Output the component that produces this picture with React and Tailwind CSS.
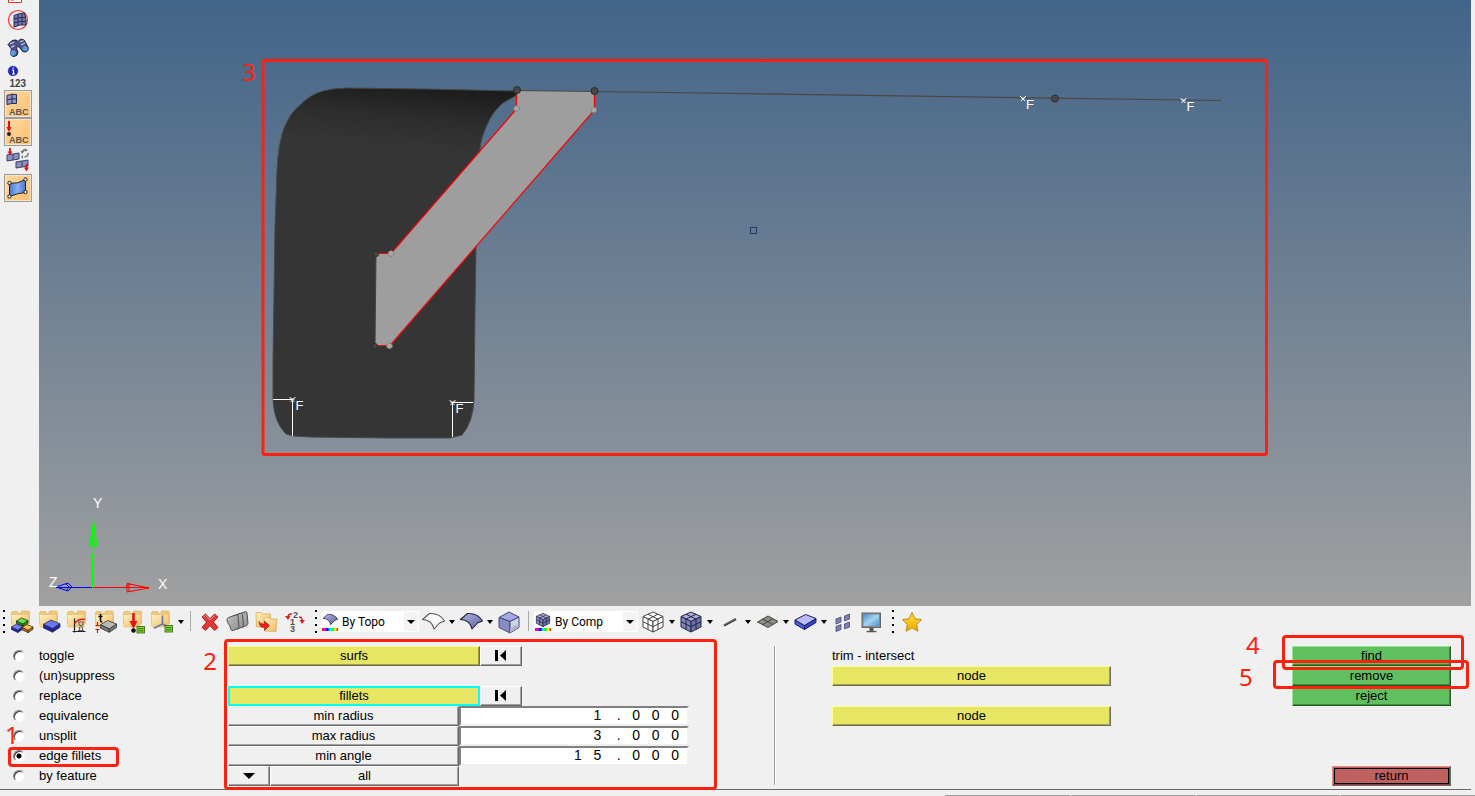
import React, { useState } from 'react';
import clsx from 'clsx';

const MODES = ['toggle', '(un)suppress', 'replace', 'equivalence', 'unsplit', 'edge fillets', 'by feature'];

const TONES = {
  gray: 'bg-[#f0f0f0] border-t-white border-l-white border-r-[#696969] border-b-[#696969] shadow-[inset_-1px_-1px_0_#a0a0a0]',
  yellow: 'bg-[#e6e664] border-t-[#ffff96] border-l-[#ffff96] border-r-[#696969] border-b-[#696969] shadow-[inset_-1px_-1px_0_#a4a438]',
  green: 'bg-[#60c060] border-t-[#90e890] border-l-[#90e890] border-r-[#405040] border-b-[#205c20] shadow-[inset_-1px_-1px_0_#3c8c3c]',
  red: 'bg-[#c06060] border-t-[#e88888] border-l-[#e88888] border-r-[#696969] border-b-[#696969] shadow-[inset_-1px_-1px_0_#8c3c3c]',
};

const PanelButton = ({ tone = 'gray', className, children, ...rest }) => (
  <button className={clsx('flex h-5 items-center justify-center border leading-4', TONES[tone], className)} {...rest}>
    {children}
  </button>
);

const Mark = ({ className }) => (
  <div className={clsx('pointer-events-none absolute z-10 rounded-[4px] border-3 border-[#ff2010]', className)} />
);

const MarkNumber = ({ className, children }) => (
  <span className={clsx("pointer-events-none absolute z-10 font-['Noto_Sans',sans-serif] text-2xl leading-6 text-[#ff2010]", className)}>{children}</span>
);

/* ---------- icons ---------- */

const Svg = ({ size = 24, className, children }) => (
  <svg width={size} height={size} viewBox={`0 0 ${size} ${size}`} className={clsx('shrink-0', className)} aria-hidden="true">
    {children}
  </svg>
);

const Gradients = () => (
  <svg width="0" height="0" className="absolute" aria-hidden="true">
    <defs>
      <linearGradient id="folder" x1="0" y1="0" x2="1" y2="1">
        <stop offset="0" stopColor="#fff2c4" />
        <stop offset="1" stopColor="#f0bc60" />
      </linearGradient>
      <linearGradient id="surface" x1="0" y1="0" x2="1" y2="1">
        <stop offset="0" stopColor="#b4b6e4" />
        <stop offset="1" stopColor="#5c60a0" />
      </linearGradient>
      <linearGradient id="card" x1="0" y1="0" x2="1" y2="1">
        <stop offset="0" stopColor="#c0c0c0" />
        <stop offset="1" stopColor="#909090" />
      </linearGradient>
      <linearGradient id="gold" x1="0" y1="0" x2="0" y2="1">
        <stop offset="0" stopColor="#ffe040" />
        <stop offset="1" stopColor="#f0a800" />
      </linearGradient>
      <linearGradient id="sky" x1="0" y1="0" x2="1" y2="1">
        <stop offset="0" stopColor="#4c94d0" />
        <stop offset="0.5" stopColor="#a4d4f0" />
        <stop offset="1" stopColor="#4c94d0" />
      </linearGradient>
      <linearGradient id="face" x1="0" y1="0" x2="1" y2="0">
        <stop offset="0" stopColor="#4478d0" />
        <stop offset="0.5" stopColor="#88b0f0" />
        <stop offset="1" stopColor="#4478d0" />
      </linearGradient>
    </defs>
  </svg>
);

const Folder = () => (
  <g>
    <path d="M1.500 2.500q0-1 1-1h5l1.500 2h2V2q0-1 1-1h6q1.500 0 1.500 1.500v11h-18z" fill="#f0c878" stroke="#dcb060" strokeWidth=".6" />
    <path d="M1 4.500h18l-1 12.500H2z" fill="url(#folder)" stroke="#e8bc70" strokeWidth=".6" />
  </g>
);

const Slab = ({ x, y, w, fill, side }) => (
  <g stroke="#222" strokeWidth=".7" strokeLinejoin="round">
    <path d={`M${x} ${y + w * 0.26}l${w * 0.55} ${w * 0.26}v${w * 0.22}l${-w * 0.55} ${-w * 0.26}z`} fill={side} />
    <path d={`M${x + w * 0.55} ${y + w * 0.52}l${w * 0.45} ${-w * 0.3}v${w * 0.22}l${-w * 0.45} ${w * 0.3}z`} fill={side} />
    <path d={`M${x} ${y + w * 0.26}l${w * 0.45} ${-w * 0.26}l${w * 0.55} ${w * 0.22}l${-w * 0.45} ${w * 0.3}z`} fill={fill} />
  </g>
);

const ListBadge = ({ x, y }) => (
  <g>
    <rect x={x} y={y} width="7.500" height="6.500" fill="#8ce030" stroke="#285c10" strokeWidth=".8" />
    <path d={`M${x + 1} ${y + 2.2}h5.500M${x + 1} ${y + 4.4}h5.500`} stroke="#285c10" strokeWidth=".9" />
  </g>
);

const AssemblyIcon = () => (
  <Svg>
    <Folder />
    <Slab x={6.5} y={8} w={11.5} fill="#5ce83c" side="#209418" />
    <Slab x={1.5} y={14} w={11.5} fill="#7080ff" side="#2028b8" />
    <Slab x={12} y={14.5} w={11} fill="#ffc048" side="#c07810" />
  </Svg>
);

const ComponentIcon = () => (
  <Svg>
    <Folder />
    <Slab x={5.5} y={10} w={16.5} fill="#6878ff" side="#1c24c0" />
  </Svg>
);

const MaterialIcon = () => (
  <Svg>
    <Folder />
    <path d="M8.500 8.500v14M6.500 21.500h13" stroke="#222" strokeWidth="1.200" fill="none" />
    <path d="M8.500 13.500q4-5 10.500-4" stroke="#e02020" strokeWidth="1.500" fill="none" />
    <path d="M12 12h6M13 12v2.500l3.500 3v3M17 12v2.500l-3.500 3v3M12 20.500h6" stroke="#666" strokeWidth="1.200" fill="#eee" />
  </Svg>
);

const PropertyIcon = () => (
  <Svg>
    <Folder />
    <path d="M6.500 4v6.500q0 1.500 1.800 1.200M4.500 6.500h4" stroke="#000" strokeWidth="1.500" fill="none" />
    <path d="M3.500 12v3M1.500 15.500h4M3.500 23v-3M1.500 19.500h4" stroke="#c01818" strokeWidth="1.200" />
    <Slab x={6.5} y={10.5} w={16} fill="#b8b8b8" side="#787878" />
  </Svg>
);

const LoadIcon = () => (
  <Svg>
    <Folder />
    <path d="M11.500 3v9" stroke="#e01414" strokeWidth="2.600" />
    <path d="M7.500 11h8l-4 8z" fill="#e01414" />
    <circle cx="11.500" cy="20.500" r="2.300" fill="#111" />
    <ListBadge x={15} y={16.5} />
  </Svg>
);

const SystemIcon = () => (
  <Svg>
    <Folder />
    <path d="M12.500 6v8l-8 4M12.500 14l6 3" stroke="#6878a8" strokeWidth="1.600" fill="none" strokeLinecap="round" />
    <ListBadge x={15} y={15.5} />
  </Svg>
);

const DeleteIcon = () => (
  <Svg>
    <path d="M4 7l3.500-3 4.500 4.700L16.500 4 20 7l-4.600 5 4.600 5.500-3.500 3-4.500-5-4.500 5L4 17.500 8.600 12z" fill="#e03838" stroke="#b82020" strokeWidth="1" strokeLinejoin="round" />
    <path d="M5.500 7l2-1.500L12 10l4.500-4.500" stroke="#ff9090" strokeWidth="1" fill="none" />
  </Svg>
);

const CardsIcon = () => (
  <Svg>
    {[9, 4.5, 0].map((d) => (
      <path
        key={d}
        d={`M${1 + d} ${9.5 - d * 0.35}q0-1.500 1.500-2l7.500-2.500q1.800-.6 2 1.200l1 10.500q0 1.300-1.200 1.800l-4.500 2q-1.800.7-2.300-1-1-4-3-6.500-1-1.500-1-3.500z`}
        fill="url(#card)"
        stroke="#505050"
        strokeWidth="1"
      />
    ))}
  </Svg>
);

const OrganizeIcon = () => (
  <Svg>
    <path d="M2 3.500q0-1 1-1h4l1.500 1.500h8V17H2.500z" fill="url(#folder)" stroke="#dcac54" strokeWidth=".8" />
    <path d="M10 8.500q0-1 1-1h4l1.500 1.500h6.500l-1 12.500-11-.5z" fill="url(#folder)" stroke="#dcac54" strokeWidth=".8" />
    <path d="M5 11.500q1.500 3 5.500 2.500v-3l5 4.500-5 5v-3q-5.500.5-5.500-6z" fill="#e82018" stroke="#b01010" strokeWidth=".6" />
  </Svg>
);

const RenumberIcon = () => (
  <Svg>
    <g fontFamily="Liberation Sans, sans-serif" fontWeight="700" fontSize="9" fill="#555">
      <text x="11" y="8">2</text>
      <text x="8" y="15">1</text>
      <text x="8" y="22">3</text>
    </g>
    <path d="M10 4Q6.500 3.500 6 6.500M17 7q3.500 0 3 4" stroke="#e02020" strokeWidth="1.400" fill="none" />
    <path d="M3 6h5.500L6 10zM17.500 10h5.500L20 14z" fill="#e02020" />
  </Svg>
);

const CurvedSurface = ({ outline, size = 24 }) => (
  <svg width={size} height={size} viewBox="0 0 24 24" className="shrink-0" aria-hidden="true">
    <path
      d="M1.500 9.500L8.500 3.500Q19 3 23.500 11L18.500 13 13 19Q11 10 1.500 9.500z"
      fill={outline ? '#f8f8f8' : 'url(#surface)'}
      stroke={outline ? '#555' : '#22223a'}
      strokeWidth="1.100"
      strokeLinejoin="round"
    />
  </svg>
);

const CubeIcon = () => (
  <Svg>
    <path d="M2 7.500L12 2l10 5-9 4.500z" fill="#a4a8e0" stroke="#444878" />
    <path d="M2 7.500l11 4V23L2 17.500z" fill="#888cc4" stroke="#444878" />
    <path d="M13 11.500l9-4.500v10.500L13 23z" fill="#d0d2e4" stroke="#444878" />
    <path d="M13 23l9-6-3-2-6 3.500z" fill="#b0b2cc" />
  </Svg>
);

const MeshCube = ({ wire, size = 24 }) => (
  <svg width={size} height={size} viewBox="0 0 24 24" className="shrink-0" aria-hidden="true">
    <g stroke={wire ? '#444' : '#24243c'} strokeWidth="1" strokeLinejoin="round">
      <path d="M2 6.500L12 2l10 4.500-10 5z" fill={wire ? '#fff' : '#a8acdc'} />
      <path d="M2 6.500l10 5V22L2 17z" fill={wire ? '#fff' : '#8084bc'} />
      <path d="M22 6.500l-10 5V22l10-5z" fill={wire ? '#fff' : '#6c70a8'} />
      <path d="M7 4.200l10 5v10.500M17 4.200l-10 5v10.500M2 11.700l10 5 10-5" fill="none" />
    </g>
  </svg>
);

const LineIcon = () => (
  <Svg>
    <path d="M7 15.500L19 9" stroke="#333" strokeWidth="2.200" />
    <path d="M7 15L19 8.500" stroke="#999" strokeWidth=".7" />
  </Svg>
);

const PlateIcon = () => (
  <Svg>
    <path d="M2.500 12L13 6l10 5.500L13 17.500z" fill="#8c8c84" stroke="#444" />
    <path d="M7.500 9l10.500 5.500M18 8.700L7.500 14.700" stroke="#444" />
  </Svg>
);

const SolidIcon = () => (
  <Svg>
    <path d="M2 10v4l9.500 5.500v-4z" fill="#4c5cf0" stroke="#181c58" strokeLinejoin="round" />
    <path d="M11.500 15.500v4L23 12.500v-4z" fill="#3444d0" stroke="#181c58" strokeLinejoin="round" />
    <path d="M2 10l10.500-5.500L23 8.500l-11.500 7z" fill="#b8bcff" stroke="#181c58" strokeLinejoin="round" />
  </Svg>
);

const ShrinkIcon = () => (
  <Svg>
    <g fill="#7c80b8" stroke="#444878" strokeWidth=".8">
      <path d="M5 9l5-2v5l-5 2zM13.500 6l5-2v5l-5 2zM5 16.500l5-2v5L5 21.500zM13.500 14l5-2v5l-5 2z" />
    </g>
  </Svg>
);

const MonitorIcon = () => (
  <Svg>
    <rect x="3" y="3" width="18.500" height="14.500" fill="#888" stroke="#666" />
    <rect x="4.500" y="4.500" width="15.500" height="11.500" fill="url(#sky)" />
    <path d="M10.500 18h4v3h-4zM7.500 21h10v1.200h-10z" fill="#555" />
  </Svg>
);

const StarIcon = () => (
  <Svg>
    <path d="M13 2.500l3 6.300 6.500.8-4.800 4.700 1.200 7-5.900-3.500-5.900 3.500 1.200-7L3.500 9.600 10 8.800z" fill="url(#gold)" stroke="#c08810" strokeLinejoin="round" />
  </Svg>
);

const ToolButton = ({ label, children }) => (
  <button className="h-6 w-6 shrink-0" aria-label={label} title={label}>{children}</button>
);

const Caret = () => (
  <span className="flex h-6 w-[14px] shrink-0 items-center justify-center">
    <svg width="6" height="4" viewBox="0 0 6 4" aria-hidden="true"><path d="M0 0h6L3 4z" fill="#000" /></svg>
  </span>
);

const Grip = ({ className }) => (
  <svg width="4" height="24" viewBox="0 0 4 24" className={clsx('shrink-0', className)} aria-hidden="true">
    <path d="M1 0h2v2H1zM1 7h2v2H1zM1 14h2v2H1zM1 21h2v2H1z" fill="#000" />
  </svg>
);

const Separator = ({ className }) => <div className={clsx('mt-px h-5 w-px shrink-0 bg-[#a8a8a8]', className)} />;

const Combo = ({ label, icon, options, className }) => (
  <div className={clsx('relative mt-px flex h-[21px] shrink-0 items-center bg-white', className)}>
    <span className="flex w-[18px] shrink-0 flex-col items-center">
      {icon}
      <span className="h-[3px] w-4 bg-[linear-gradient(90deg,#f00,#f0f,#00f,#0ff,#0f0,#ff0,#f00)]" />
    </span>
    <select aria-label={label} className="h-full min-w-0 flex-1 appearance-none bg-transparent pl-[3px] font-[Roboto,sans-serif] text-xs text-black outline-none">
      {options.map((o) => <option key={o}>{o}</option>)}
    </select>
    <span className="pointer-events-none absolute inset-y-px right-px flex w-[14px] items-center justify-center bg-[#f4f4f4]">
      <svg width="8" height="4" viewBox="0 0 8 4" aria-hidden="true"><path d="M0 0h8L4 4z" fill="#000" /></svg>
    </span>
  </div>
);

/* ---------- left bar ---------- */

const SideButton = ({ label, pressed, children }) => (
  <button
    aria-label={label}
    className={clsx('flex h-7 w-7 shrink-0 items-center justify-center border', pressed ? 'border-[#9c9c9c] bg-[linear-gradient(135deg,#ffd8a0,#ffc070)] shadow-[inset_0_0_0_1px_#f4e4cc]' : 'border-transparent')}
  >
    {children}
  </button>
);

const ABC = () => (
  <text x="3" y="23" fontFamily="Liberation Sans, sans-serif" fontWeight="700" fontSize="9" fill="#555">ABC</text>
);

const SideBar = () => (
  <aside className="flex w-[39px] shrink-0 flex-col overflow-hidden pl-1">
    <svg width="28" height="6" viewBox="0 0 28 6" className="shrink-0" aria-hidden="true">
      <path d="M4.500 0v2.500h13V0M7 0h3" fill="#fff" stroke="#f03018" />
    </svg>
    <SideButton label="Mask">
      <Svg>
        <circle cx="12" cy="12" r="9.500" fill="#f4e8ec" stroke="#f03828" strokeWidth="1.200" />
        <path d="M8 7.500Q13 5 19 5v2q1.500 5 1 10-6-1-12 2z" fill="#7478b0" stroke="#282c58" />
        <path d="M12 6v12M16 5.500v11.500M8 11q6-2 12-1.500M8 15q6-2.500 12-1.500" stroke="#282c58" fill="none" />
      </Svg>
    </SideButton>
    <SideButton label="Find">
      <Svg>
        <path d="M2 8.500l4-4 4-.5 2 1.500 2.500-2.500 3.500 1 4 7q1 4-2.500 5-3.500.5-4.500-3l-3-2.500-2 1 2 4.500q0 4-4 4.500-3.500 0-3.500-3.500l1-4z" fill="#4c5084" stroke="#1c2040" />
        <circle cx="7" cy="17" r="2.800" fill="#5c9cf0" />
        <circle cx="19" cy="12.500" r="2.500" fill="#5c9cf0" />
        <path d="M4 8l4-2M5 11.500l3.500-2M14 6l3.500-1.500M15 9l4-2" stroke="#c8cce4" strokeWidth="1.300" />
      </Svg>
    </SideButton>
    <SideButton label="Numbers">
      <Svg>
        <circle cx="7" cy="7" r="4.800" fill="#1c28c0" stroke="#101878" strokeWidth=".5" />
        <path d="M6 6h1.500v4M6 10h3M6.500 4h1.500" stroke="#fff" strokeWidth="1.200" fill="none" />
        <text x="3.500" y="23" fontFamily="Liberation Sans, sans-serif" fontWeight="700" fontSize="10" fill="#444">123</text>
      </Svg>
    </SideButton>
    <SideButton label="Element labels" pressed>
      <Svg>
        <path d="M1 3.500q5-2 9.500-1v9Q6 11 1 12.500zM6 2v9.500M1 8q5-2 9.500-1" fill="#9094c8" stroke="#282c58" />
        <ABC />
      </Svg>
    </SideButton>
    <SideButton label="Load labels" pressed>
      <Svg>
        <path d="M3 1v7" stroke="#e01414" strokeWidth="2" />
        <path d="M.5 7h5L3 12z" fill="#e01414" />
        <circle cx="3" cy="14" r="2" fill="#222" />
        <ABC />
      </Svg>
    </SideButton>
    <SideButton label="Transform">
      <Svg>
        <path d="M1 7l12-2v6L1 13zM7 6v6M10 14l12-2v6l-12 2zM16 13v6" fill="#8c90c0" stroke="#383c68" />
        <path d="M4 0v4M20.500 16v4" stroke="#e01414" strokeWidth="1.800" />
        <path d="M1.500 3.500h5L4 7.500zM18 19.500h5l-2.500 4z" fill="#e01414" />
        <path d="M16 4q1.500-3 4.500-2M22 5q.5 3.500-3.500 4" stroke="#888" strokeWidth="1.800" fill="none" />
        <path d="M14.500 3h4L16 6zM17 7v4l-2-2zM19.500.5l2.500 2-3 1z" fill="#777" />
      </Svg>
    </SideButton>
    <SideButton label="Surface edges" pressed>
      <Svg>
        <path d="M3.500 7.500Q12 8 19.500 3.500v13Q12 17 3.500 20.500z" fill="url(#face)" stroke="#222" />
        <g fill="#f0e8d8" stroke="#222">
          <circle cx="3.500" cy="7" r="1.700" />
          <circle cx="19.500" cy="3.500" r="1.700" />
          <circle cx="19.500" cy="16" r="1.700" />
          <circle cx="3.500" cy="20.500" r="1.700" />
        </g>
      </Svg>
    </SideButton>
  </aside>
);

/* ---------- model view ---------- */

const FixedPoint = ({ x, y }) => (
  <g>
    <path d={`M${x - 3} ${y - 2}l5 5M${x + 3} ${y - 2}l-5 5M${x - 2} ${y}h4`} stroke="#fff" />
    <text x={x + 3} y={y + 11} fontSize="13" fill="#fff">F</text>
  </g>
);

const ModelView = () => (
  <main className="min-w-0 flex-1 overflow-hidden bg-[linear-gradient(#426488,#a0a0a0)]">
    <svg viewBox="39 0 1432 606" preserveAspectRatio="xMinYMin meet" className="block h-full w-full font-['Liberation_Sans',Arial,sans-serif]">
      <defs>
        <linearGradient id="shell" gradientUnits="userSpaceOnUse" x1="440" y1="88" x2="434" y2="150">
          <stop offset="0" stopColor="#1c1c1c" />
          <stop offset="0.5" stopColor="#2c2c2c" />
          <stop offset="1" stopColor="#353535" />
        </linearGradient>
      </defs>
      <path
        d="M277 170Q278 145 284 128 290 113 300 105 311 94 323 91 334 88 347 88L425 89 517 91V95L503 103Q493 111 487 125 481 138 480 148L476 247 475 307 474 400Q473 422 462 435L450 438 387 438 310 437 293 436 286 434Q274 422 273 400V360L275 227z"
        fill="url(#shell)"
        stroke="#484848"
      />
      <path d="M517 91L594 91V110L390 346H375L376 254H391L517 109z" fill="#9e9e9e" />
      <path d="M376 254L375 346" stroke="#444" />
      <path d="M516.500 95V109L391 253.500H376M594.500 91V110L390 345.500H375" fill="none" stroke="#ff0000" strokeWidth="1.200" />
      <path d="M517 90.500L594 91.500 1221 100.500" fill="none" stroke="#4c4844" strokeWidth="1.200" />
      {[[517, 90], [594.5, 91], [1055, 98.5], [376, 254], [375, 346]].map(([cx, cy], i) => (
        <circle key={cx} cx={cx} cy={cy} r={i < 3 ? 3.5 : 2.5} fill="#484848" stroke="#2c2c2c" />
      ))}
      {[[516.5, 108.5], [594, 110], [391, 253.5], [389.5, 346]].map(([cx, cy]) => (
        <circle key={cx} cx={cx} cy={cy} r="2.800" fill="#a8a8a8" stroke="#777" strokeDasharray="2 1" />
      ))}

      <path d="M273 399.500H292.500V436M473 402.500H452.500V437" fill="none" stroke="#fff" />
      <FixedPoint x={292.5} y={399} />
      <FixedPoint x={452.5} y={402} />
      <FixedPoint x={1023} y={98} />
      <FixedPoint x={1183.5} y={100} />
      <rect x="750.500" y="227.500" width="6" height="6" fill="none" stroke="#1c3c68" />

      <g fill="none">
        <path d="M92.500 587V553" stroke="#00ff00" strokeWidth="1.500" />
        <path d="M93.500 520V552M93.500 523L90 545.500H97L93.500 523L91.500 545" stroke="#00ff00" strokeWidth="1.500" />
        <path d="M93 587.500H149M149 588L127 583.500V592L149 588M129 583v9M125 587.500l5-4" stroke="#ff0000" />
        <path d="M92 587.500H56M56 587L68 583l4 4-4 4L56 587M66 584l3 3-3 4" stroke="#0000ff" />
      </g>
      <g fontSize="14" fill="#fff">
        <text x="93" y="508">Y</text>
        <text x="49" y="587">Z</text>
        <text x="158" y="589">X</text>
      </g>

      <rect x="263" y="60.500" width="1003.500" height="394" rx="2" fill="none" stroke="#ff2010" strokeWidth="3" />
      <text x="242" y="81" fontSize="24" fill="#ff2010" className="font-['Noto_Sans',sans-serif]">3</text>
    </svg>
  </main>
);

const ToolBar = () => (
  <nav className="flex h-[34px] shrink-0 items-start overflow-hidden pt-1 pl-[2px]">
    <Grip className="mr-1" />
    <div className="flex gap-1">
      <ToolButton label="Assemblies"><AssemblyIcon /></ToolButton>
      <ToolButton label="Components"><ComponentIcon /></ToolButton>
      <ToolButton label="Materials"><MaterialIcon /></ToolButton>
      <ToolButton label="Properties"><PropertyIcon /></ToolButton>
      <ToolButton label="Load collectors"><LoadIcon /></ToolButton>
      <ToolButton label="System collectors"><SystemIcon /></ToolButton>
    </div>
    <Caret />
    <Separator className="mr-[7px] ml-[2px]" />
    <div className="flex gap-1">
      <ToolButton label="Delete"><DeleteIcon /></ToolButton>
      <ToolButton label="Card edit"><CardsIcon /></ToolButton>
      <ToolButton label="Organize"><OrganizeIcon /></ToolButton>
      <ToolButton label="Renumber"><RenumberIcon /></ToolButton>
    </div>
    <Grip className="mr-[3px] ml-2" />
    <Combo label="Geometry color mode" className="w-[98px]" icon={<CurvedSurface size={16} />} options={['By Topo', 'By Comp', 'By Assem']} />
    <div className="ml-[2px] flex">
      <ToolButton label="Wireframe geometry"><CurvedSurface outline /></ToolButton>
      <Caret />
      <ToolButton label="Shaded geometry"><CurvedSurface /></ToolButton>
      <Caret />
      <ToolButton label="Transparency"><CubeIcon /></ToolButton>
    </div>
    <Separator className="mr-[5px] ml-[7px]" />
    <Combo label="Element color mode" className="w-[104px]" icon={<MeshCube size={16} />} options={['By Comp', 'By Prop', 'By Mat']} />
    <div className="ml-[3px] flex">
      <ToolButton label="Wireframe elements"><MeshCube wire /></ToolButton>
      <Caret />
      <ToolButton label="Shaded elements"><MeshCube /></ToolButton>
      <Caret />
      <ToolButton label="1D elements"><LineIcon /></ToolButton>
      <Caret />
      <ToolButton label="2D elements"><PlateIcon /></ToolButton>
      <Caret />
      <ToolButton label="3D elements"><SolidIcon /></ToolButton>
      <Caret />
    </div>
    <div className="flex gap-1">
      <ToolButton label="Shrink"><ShrinkIcon /></ToolButton>
      <ToolButton label="Display options"><MonitorIcon /></ToolButton>
    </div>
    <Grip className="mr-1 ml-2" />
    <ToolButton label="Favorites"><StarIcon /></ToolButton>
  </nav>
);

/* ---------- edge edit panel ---------- */

const ResetButton = ({ label }) => (
  <PanelButton className="w-[42px]" aria-label={label}>
    <svg width="12" height="12" viewBox="0 0 12 12" aria-hidden="true"><path d="M0 0h3v11H0zM11 0v11L5 5.500z" fill="#000" /></svg>
  </PanelButton>
);

const ValueRow = ({ id, label, value, onChange }) => (
  <div className="flex">
    <label htmlFor={id} className={clsx('flex h-5 w-[231px] items-center justify-center border leading-4', TONES.gray)}>{label}</label>
    <input
      id={id}
      value={value}
      onChange={(e) => onChange(e.target.value)}
      className="h-5 w-[230px] border-2 border-t-[#808080] border-r-[#f0f0f0] border-b-[#f0f0f0] border-l-[#808080] bg-white pr-2 pb-[2px] text-right text-sm leading-4 outline-none"
    />
  </div>
);

const EdgePanel = () => {
  const [mode, setMode] = useState('edge fillets');
  const [values, setValues] = useState({
    minRadius: '1    .   0   0   0',
    maxRadius: '3    .   0   0   0',
    minAngle: '1   5    .   0   0   0',
  });
  const setValue = (key) => (v) => setValues({ ...values, [key]: v });

  return (
    <section className="mr-1 flex shrink-0 border-b border-[#696969] pt-[6px] pb-[3px]">
      <fieldset className="relative w-[228px] shrink-0 pl-[13px]">
        {MODES.map((m) => (
          <label key={m} className="flex h-5 items-center gap-[14px]">
            <input
              type="radio"
              name="mode"
              checked={mode === m}
              onChange={() => setMode(m)}
              className="h-3 w-3 appearance-none rounded-full border border-t-[#808080] border-r-[#f8f8f8] border-b-[#f8f8f8] border-l-[#808080] bg-white shadow-[inset_1px_1px_0_#404040] checked:bg-[radial-gradient(circle,#000_2px,#fff_3px)]"
            />
            {m}
          </label>
        ))}
        <Mark className="top-[101px] left-2 h-5 w-[111px]" />
        <MarkNumber className="top-[77px] left-[5px]">1</MarkNumber>
        <MarkNumber className="top-[3px] right-[11px]">2</MarkNumber>
      </fieldset>

      <div className="relative w-[461px] shrink-0">
        <div className="mb-5 flex">
          <PanelButton tone="yellow" className="w-[252px]">surfs</PanelButton>
          <ResetButton label="Reset surfs" />
        </div>
        <div className="flex">
          <PanelButton tone="yellow" className="w-[252px] outline-2 -outline-offset-2 outline-[#00ffff]">fillets</PanelButton>
          <ResetButton label="Reset fillets" />
        </div>
        <ValueRow id="min-radius" label="min radius" value={values.minRadius} onChange={setValue('minRadius')} />
        <ValueRow id="max-radius" label="max radius" value={values.maxRadius} onChange={setValue('maxRadius')} />
        <ValueRow id="min-angle" label="min angle" value={values.minAngle} onChange={setValue('minAngle')} />
        <div className="flex">
          <PanelButton className="w-[42px]" aria-label="Switch filter">
            <svg width="12" height="6" viewBox="0 0 12 6" aria-hidden="true"><path d="M0 0h12L6 6z" fill="#000" /></svg>
          </PanelButton>
          <PanelButton className="w-[189px]">all</PanelButton>
        </div>
        <Mark className="-top-[7px] -left-1 h-[151px] w-[493px]" />
      </div>

      <div className="ml-[85px] h-[139px] w-[2px] shrink-0 border-r border-l border-r-white border-l-[#a0a0a0]" />

      <div className="ml-14 w-[279px] shrink-0">
        <p className="h-5 leading-5">trim - intersect</p>
        <PanelButton tone="yellow" className="mb-5 w-full">node</PanelButton>
        <PanelButton tone="yellow" className="w-full">node</PanelButton>
      </div>

      <div className="relative mr-5 ml-auto flex w-[159px] shrink-0 flex-col">
        <PanelButton tone="green">find</PanelButton>
        <PanelButton tone="green">remove</PanelButton>
        <PanelButton tone="green">reject</PanelButton>
        <PanelButton tone="red" className="mt-auto w-[119px] self-end outline-1 -outline-offset-3 outline-black">return</PanelButton>
        <Mark className="-top-[11px] -left-[10px] h-[35px] w-[182px]" />
        <Mark className="top-[14px] -left-[19px] h-[29px] w-[196px]" />
        <MarkNumber className="-top-[13px] -left-[46px]">4</MarkNumber>
        <MarkNumber className="top-[19px] -left-[53px]">5</MarkNumber>
      </div>
    </section>
  );
};

const App = () => (
  <div className="flex h-screen w-full flex-col overflow-hidden bg-[#f0f0f0] font-['Liberation_Sans',Arial,sans-serif] text-[13px] text-black">
    <Gradients />
    <div className="flex min-h-0 flex-1 pr-1">
      <SideBar />
      <ModelView />
    </div>
    <ToolBar />
    <EdgePanel />
    <footer className="flex h-[6px] shrink-0 items-end justify-end gap-px">
      <div className="h-px w-[125px] bg-[#a0a0a0]" />
      <div className="h-px w-[125px] bg-[#a0a0a0]" />
      <div className="h-px w-[143px] bg-[#a0a0a0]" />
      <div className="h-px w-[134px] bg-[#a0a0a0]" />
    </footer>
  </div>
);

export default App;
